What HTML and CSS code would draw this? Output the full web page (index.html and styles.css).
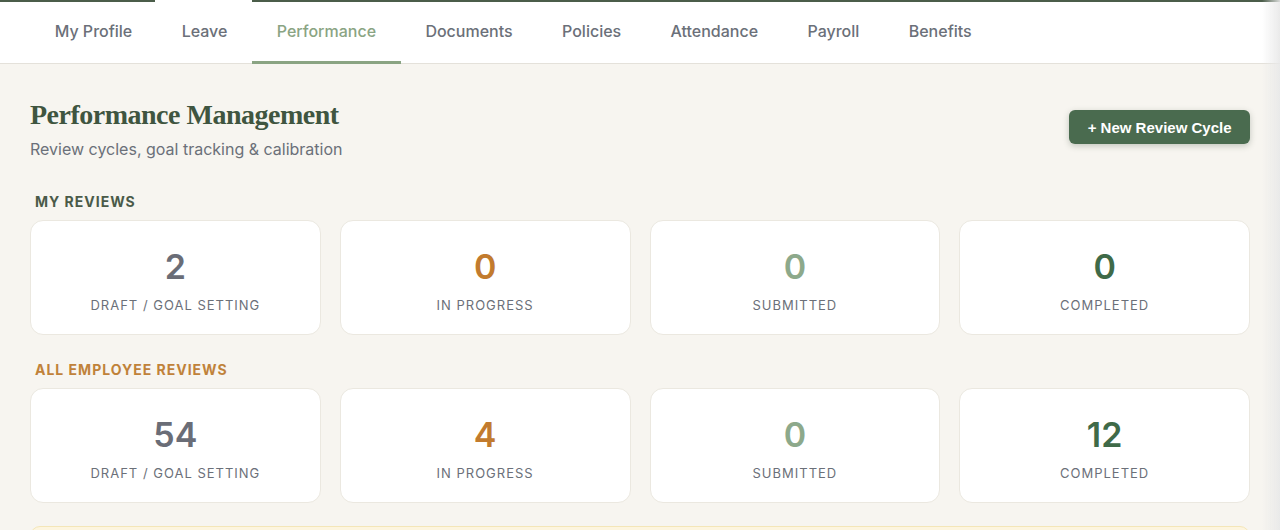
FILE: index.html
```html
<!DOCTYPE html>
<html lang="en">
<head>
<meta charset="utf-8">
<title>Performance Management</title>
<link rel="stylesheet" href="styles.css">
</head>
<body>
<div class="topline"></div>
<nav class="tabs">
  <a class="tab">My Profile</a>
  <a class="tab">Leave</a>
  <a class="tab active">Performance</a>
  <a class="tab">Documents</a>
  <a class="tab">Policies</a>
  <a class="tab">Attendance</a>
  <a class="tab">Payroll</a>
  <a class="tab">Benefits</a>
</nav>
<main class="main">
  <header class="page-head">
    <div class="titles">
      <h1 class="title">Performance Management</h1>
      <p class="subtitle">Review cycles, goal tracking &amp; calibration</p>
    </div>
    <button class="btn-primary">+ New Review Cycle</button>
  </header>

  <h2 class="section-label dark">MY REVIEWS</h2>
  <div class="stats">
    <div class="card"><div class="num gray">2</div><div class="lbl">DRAFT / GOAL SETTING</div></div>
    <div class="card"><div class="num orange">0</div><div class="lbl">IN PROGRESS</div></div>
    <div class="card"><div class="num sage">0</div><div class="lbl">SUBMITTED</div></div>
    <div class="card"><div class="num green">0</div><div class="lbl">COMPLETED</div></div>
  </div>

  <h2 class="section-label amber">ALL EMPLOYEE REVIEWS</h2>
  <div class="stats">
    <div class="card"><div class="num gray">54</div><div class="lbl">DRAFT / GOAL SETTING</div></div>
    <div class="card"><div class="num orange">4</div><div class="lbl">IN PROGRESS</div></div>
    <div class="card"><div class="num sage">0</div><div class="lbl">SUBMITTED</div></div>
    <div class="card"><div class="num green">12</div><div class="lbl">COMPLETED</div></div>
  </div>

  <div class="notice"></div>
</main>
<div class="edge-shade"></div>
</body>
</html>
```

FILE: styles.css
```css
* { box-sizing: border-box; }
html, body {
  margin: 0;
  padding: 0;
  background: #f7f5f0;
  font-family: Inter, "Noto Sans", sans-serif;
  overflow: hidden;
  height: 530px;
}
.topline {
  height: 2px;
  background: linear-gradient(to right, #4b5d4a 0, #4b5d4a 155px, #ffffff 155px, #ffffff 252px, #4b5d4a 252px);
}
.tabs {
  display: flex;
  height: 62px;
  padding-left: 30px;
  background: #ffffff;
  border-bottom: 1px solid #e4e1da;
}
.tab {
  display: flex;
  align-items: center;
  padding: 0 24.7px 2px;
  font-size: 16px;
  font-weight: 500;
  color: #6b7079;
  border-bottom: 3px solid transparent;
  margin-bottom: -1px;
}
.tab.active {
  color: #8aa483;
  border-bottom-color: #8aa483;
}
.main {
  padding: 33px 30px 0;
}
.page-head {
  display: flex;
  justify-content: space-between;
  align-items: center;
}
.title {
  margin: 0;
  font-family: "Liberation Serif", "DejaVu Serif", serif;
  font-weight: 700;
  font-size: 28px;
  line-height: 34px;
  letter-spacing: -0.5px;
  color: #3f5540;
  padding-top: 1px;
}
.subtitle {
  margin: 5px 0 0;
  font-size: 16px;
  line-height: 24px;
  color: #6b7079;
}
.btn-primary {
  margin-top: -4px;
  height: 34px;
  padding: 0 18.5px;
  border: 0;
  border-radius: 6px;
  background: #4a6b4f;
  color: #ffffff;
  font-family: "Liberation Sans", Arial, sans-serif;
  font-weight: 700;
  font-size: 15px;
  box-shadow: 0 2px 6px rgba(40, 60, 40, 0.25);
}
.section-label {
  margin: 31px 0 8px 5px;
  font-size: 14px;
  line-height: 20px;
  font-weight: 700;
  letter-spacing: 1px;
}
.section-label.dark { color: #4a5a48; }
.section-label.amber { color: #c0823a; margin-top: 25px; }
.stats {
  display: grid;
  grid-template-columns: repeat(4, 1fr);
  gap: 19px;
}
.card {
  height: 115px;
  background: #ffffff;
  border: 1px solid #ebe8e0;
  border-radius: 13px;
  padding-top: 25px;
  text-align: center;
}
.num {
  font-size: 34px;
  line-height: 41px;
  font-weight: 600;
}
.num.gray { color: #6a6d77; }
.num.orange { color: #c27b2e; }
.num.sage { color: #8da98b; }
.num.green { color: #3f6a48; }
.lbl {
  margin-top: 10px;
  font-size: 13px;
  line-height: 16px;
  letter-spacing: 1px;
  color: #6b7079;
}
.notice {
  margin-top: 23px;
  height: 40px;
  background: #fdf5df;
  border: 1px solid #f4e6b8;
  border-radius: 10px;
}
.edge-shade {
  position: fixed;
  top: 0;
  right: 0;
  width: 18px;
  height: 530px;
  background: linear-gradient(to right, rgba(235, 235, 235, 0), rgba(232, 232, 232, 0.9));
}
```
